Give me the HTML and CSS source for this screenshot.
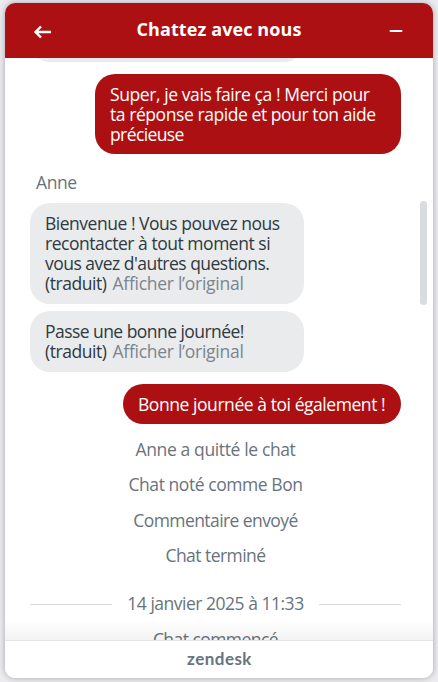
FILE: index.html
```html
<!DOCTYPE html>
<html lang="fr">
<head>
<meta charset="utf-8">
<title>Chattez avec nous</title>
<link rel="stylesheet" href="styles.css">
</head>
<body>
<main class="widget">
  <header class="header">
    <svg class="back" width="18" height="14" viewBox="0 0 18 14"><path d="M8 1.500 2.500 7l5.500 5.500M2.600 7H18" fill="none" stroke="#fff" stroke-width="2.400"/></svg>
    <h1 class="title">Chattez avec nous</h1>
    <svg class="minimize" width="14" height="4" viewBox="0 0 14 4"><path d="M1.500 2h11" stroke="#fff" stroke-width="2" stroke-linecap="round"/></svg>
  </header>
  <section class="log">
    <div class="bubble agent previous"></div>
    <div class="bubble visitor first"><span class="line a1">Super, je vais faire ça ! Merci pour</span><span class="line a2">ta réponse rapide et pour ton aide</span><span class="line a3">précieuse</span></div>
    <div class="author">Anne</div>
    <div class="bubble agent"><span class="line b1">Bienvenue ! Vous pouvez nous</span><span class="line b2">recontacter à tout moment si</span><span class="line b3">vous avez d'autres questions.</span><span class="line b4">(traduit) <a class="original">Afficher l’original</a></span></div>
    <div class="bubble agent"><span class="line b5">Passe une bonne journée!</span><span class="line b4">(traduit) <a class="original">Afficher l’original</a></span></div>
    <div class="bubble visitor reply"><span class="line c1">Bonne journée à toi également !</span></div>
    <div class="event"><span class="e1">Anne a quitté le chat</span></div>
    <div class="event"><span class="e2">Chat noté comme Bon</span></div>
    <div class="event"><span class="e3">Commentaire envoyé</span></div>
    <div class="event"><span class="e4">Chat terminé</span></div>
    <div class="date"><span class="e5">14 janvier 2025 à 11:33</span></div>
    <div class="event started"><span class="e6">Chat commencé</span></div>
    <div class="scrollbar"></div>
    <div class="fade"></div>
  </section>
  <footer class="footer"><span class="brand">zendesk</span></footer>
</main>
</body>
</html>
```
FILE: styles.css
```css
* { box-sizing: border-box; }
body {
  margin: 0;
  height: 682px;
  padding: 3px 5px 4px;
  overflow: hidden;
  background: #ebebf0;
  font: 17.5px/20px "Open Sans", "Noto Sans", sans-serif;
  letter-spacing: -0.5px;
  color: #2f3941;
}
.widget {
  display: flex;
  flex-direction: column;
  height: 675px;
  border-radius: 10px;
  overflow: hidden;
  background: #fff;
  box-shadow: 0 0 6px rgba(0, 0, 0, .3);
}
.header {
  display: flex;
  flex: none;
  align-items: center;
  justify-content: space-between;
  height: 55px;
  padding: 0 30px 0 28px;
  background: #ad1012;
  color: #fff;
}
.back { margin-top: 2px; }
.minimize { margin-top: 0; }
.title { margin: -3px 2px 0 0; font-size: 18px; font-weight: 700; line-height: 24px; letter-spacing: .1px; white-space: nowrap; }
.log {
  position: relative;
  display: flex;
  flex: 1;
  min-height: 0;
  flex-direction: column;
  align-items: flex-start;
  padding: 0 32px 0 25px;
  overflow: hidden;
}
.log > * { flex: none; }
.bubble { padding: 10px 15px; border-radius: 20px; }
.line { display: block; height: 20px; white-space: nowrap; }
.agent { width: 274px; margin-bottom: 7px; padding-bottom: 11px; background: #e9ebed; }
.visitor { align-self: flex-end; background: #ad1012; color: #fff; }
.previous { height: 40px; margin: -36px 0 12px; }
.first { width: 306px; }
.author { margin: 18px 0 11px 6px; letter-spacing: -.4px; color: #68737d; }
.reply { width: 278px; margin: 5px 0 15px; }
.original { letter-spacing: -.27px; margin-left: 2px; color: #7b858e; }
.event { width: 371px; height: 20px; margin-bottom: 15.3px; text-align: center; color: #68737d; white-space: nowrap; }
.date {
  display: flex;
  align-items: center;
  gap: 15px;
  width: 371px;
  height: 20px;
  margin: 13px 0 16px;
  color: #68737d;
  white-space: nowrap;
}
.date::before, .date::after { content: ""; flex: 1; height: 1px; margin-top: 3px; background: #d8dcde; }
.a1 { letter-spacing: -.41px; }
.a2 { letter-spacing: -.43px; }
.a3 { letter-spacing: -.6px; }
.b1 { letter-spacing: -.48px; }
.b2 { letter-spacing: -.47px; }
.b3 { letter-spacing: -.52px; }
.b4 { letter-spacing: -.46px; }
.b5 { letter-spacing: -.55px; }
.c1 { letter-spacing: -.44px; }
.e1 { letter-spacing: -.37px; }
.e2 { letter-spacing: -.44px; }
.e3 { letter-spacing: -.58px; }
.e4, .e6 { letter-spacing: -.55px; }
.e5 { letter-spacing: -.49px; }
.scrollbar { position: absolute; top: 143px; right: 6px; width: 7px; height: 104px; border-radius: 4px; background: #d8dcde; }
.fade { position: absolute; left: 0; right: 0; bottom: 0; height: 20px; background: linear-gradient(rgba(0, 0, 0, 0), rgba(0, 0, 0, .05)); }
.footer {
  display: flex;
  flex: none;
  align-items: center;
  justify-content: center;
  height: 38px;
  border-top: 1px solid #e3e5e7;
  background: #fff;
}
.brand { margin: -2px -1px 0 0; font: 700 17px/20px "Lato", sans-serif; letter-spacing: .45px; color: #68737d; }
```
